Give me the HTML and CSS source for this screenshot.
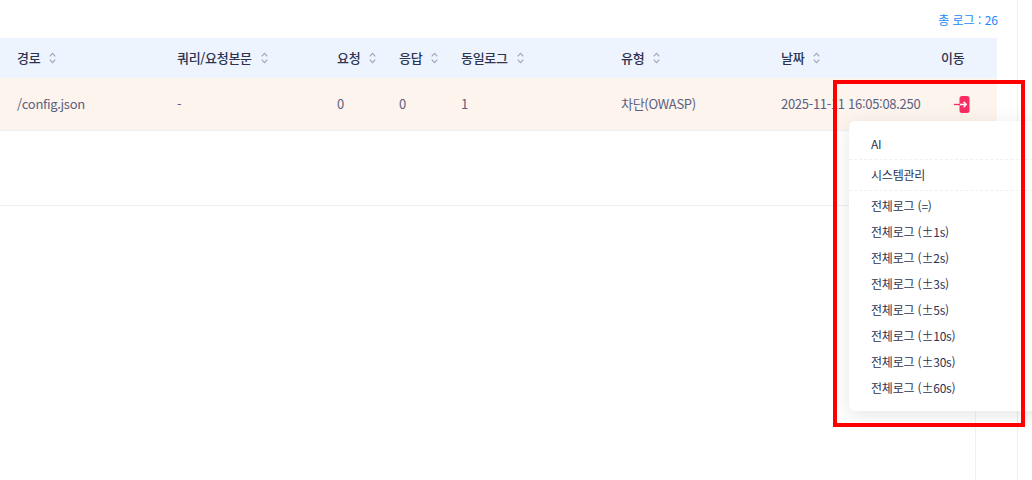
FILE: index.html
```html
<!DOCTYPE html>
<html lang="ko">
<head>
    <meta charset="UTF-8">
    <title>로그 목록</title>
    <link rel="stylesheet" href="styles.css">
</head>
<body>
    <div class="log-panel">
        <div class="log-total">총 로그 : 26</div>

        <table class="log-table">
            <colgroup>
                <col class="col-wide">
                <col class="col-wide">
                <col class="col-narrow">
                <col class="col-narrow">
                <col class="col-wide">
                <col class="col-wide">
                <col class="col-wide">
                <col>
            </colgroup>
            <thead>
                <tr>
                    <th><span class="th-label">경로<svg class="sort-icon" viewBox="0 0 7 12"><path d="M.7 4.4 3.5 1.4l2.8 3M.7 7.6l2.8 3 2.8-3"/></svg></span></th>
                    <th><span class="th-label">쿼리/요청본문<svg class="sort-icon" viewBox="0 0 7 12"><path d="M.7 4.4 3.5 1.4l2.8 3M.7 7.6l2.8 3 2.8-3"/></svg></span></th>
                    <th><span class="th-label">요청<svg class="sort-icon" viewBox="0 0 7 12"><path d="M.7 4.4 3.5 1.4l2.8 3M.7 7.6l2.8 3 2.8-3"/></svg></span></th>
                    <th><span class="th-label">응답<svg class="sort-icon" viewBox="0 0 7 12"><path d="M.7 4.4 3.5 1.4l2.8 3M.7 7.6l2.8 3 2.8-3"/></svg></span></th>
                    <th><span class="th-label">동일로그<svg class="sort-icon" viewBox="0 0 7 12"><path d="M.7 4.4 3.5 1.4l2.8 3M.7 7.6l2.8 3 2.8-3"/></svg></span></th>
                    <th><span class="th-label">유형<svg class="sort-icon" viewBox="0 0 7 12"><path d="M.7 4.4 3.5 1.4l2.8 3M.7 7.6l2.8 3 2.8-3"/></svg></span></th>
                    <th><span class="th-label">날짜<svg class="sort-icon" viewBox="0 0 7 12"><path d="M.7 4.4 3.5 1.4l2.8 3M.7 7.6l2.8 3 2.8-3"/></svg></span></th>
                    <th>이동</th>
                </tr>
            </thead>
            <tbody>
                <tr class="row-blocked">
                    <td>/config.json</td>
                    <td>-</td>
                    <td>0</td>
                    <td>0</td>
                    <td>1</td>
                    <td>차단(OWASP)</td>
                    <td>2025-11-11 16:05:08.250</td>
                    <td class="td-move">
                        <svg class="move-icon" width="17" height="17" viewBox="0 0 17 17">
                            <rect x="5.5" y="0" width="10" height="17" rx="2.5" fill="#fb2c62"/>
                            <path d="M0 8.5h6" stroke="#fb2c62" stroke-width="1.3" fill="none"/>
                            <path d="M6 8.5h6M9.6 5.8l2.7 2.7-2.7 2.7" stroke="#fff" stroke-width="1.3" fill="none"/>
                        </svg>
                    </td>
                </tr>
                <tr class="row-empty">
                    <td colspan="8"></td>
                </tr>
            </tbody>
        </table>
    </div>

    <!-- Guide lines behind the menu -->
    <div class="guide guide-inner"></div>
    <div class="guide guide-outer"></div>

    <!-- Move menu -->
    <div class="move-menu">
        <div class="menu-group">AI</div>
        <div class="menu-group">시스템관리</div>
        <ul class="menu-list">
            <li>전체로그 (=)</li>
            <li>전체로그 (±1s)</li>
            <li>전체로그 (±2s)</li>
            <li>전체로그 (±3s)</li>
            <li>전체로그 (±5s)</li>
            <li>전체로그 (±10s)</li>
            <li>전체로그 (±30s)</li>
            <li>전체로그 (±60s)</li>
        </ul>
    </div>

    <div class="highlight-box"></div>
</body>
</html>
```

FILE: styles.css
```css
:root {
    --text-strong: #2d3350;
    --text-normal: #5b6180;
    --line-color: #eef0f3;
}

html, body {
    height: 100%;
}

body {
    position: relative;
    margin: 0;
    overflow: hidden;
    background-color: #fff;
    color: var(--text-normal);
    font-family: "Noto Sans CJK KR", "Noto Sans", sans-serif;
    font-size: 13px;
    letter-spacing: -0.3px;
}

.log-panel {
    width: 997px;
}

.log-total {
    height: 38px;
    margin-right: -1px;
    line-height: 40px;
    text-align: right;
    font-size: 12px;
    letter-spacing: 0;
    color: #1e87f7;
}

/* Table */
.log-table {
    width: 100%;
    table-layout: fixed;
    border-collapse: collapse;
}

.col-wide {
    width: 160px;
}

.col-narrow {
    width: 62px;
}

.log-table th,
.log-table td {
    padding: 0 0 0 17px;
    text-align: left;
    white-space: nowrap;
}

.log-table th {
    height: 39px;
    padding-bottom: 1px;
    background-color: #edf4fe;
    color: var(--text-strong);
    font-weight: 500;
}

.th-label {
    display: flex;
    align-items: center;
    gap: 9px;
}

.sort-icon {
    width: 7px;
    height: 12px;
    fill: none;
    stroke: #9ea4bd;
    stroke-width: 1.1;
}

.row-blocked td {
    height: 50px;
    padding-bottom: 2px;
    background-color: #fdf4ee;
    border-bottom: 1px solid var(--line-color);
}

.row-empty td {
    height: 74px;
    border-bottom: 1px solid var(--line-color);
}

.log-table .td-move {
    padding-left: 30px;
    padding-bottom: 0;
}

.move-icon {
    display: block;
}

.guide {
    position: absolute;
    width: 1px;
    background-color: var(--line-color);
}

.guide-inner {
    left: 975px;
    top: 131px;
    bottom: 0;
}

.guide-outer {
    left: 1017px;
    top: 0;
    bottom: 0;
}

/* Move Menu */
.move-menu {
    position: absolute;
    left: 849px;
    top: 121px;
    width: 220px;
    padding: 8px 0 10px;
    background-color: #fff;
    border-radius: 6px;
    box-shadow: 0 4px 20px rgba(0,0,0,0.1);
    color: var(--text-strong);
    font-size: 12px;
    letter-spacing: -0.2px;
}

.menu-group {
    height: 30px;
    line-height: 30px;
    padding-left: 22px;
    border-bottom: 1px dashed var(--line-color);
}

.menu-list {
    margin: 2px 0 0;
    padding: 0;
    list-style: none;
}

.menu-list li {
    height: 26px;
    line-height: 26px;
    padding-left: 22px;
}

.highlight-box {
    position: absolute;
    left: 833px;
    top: 80px;
    width: 192px;
    height: 347px;
    box-sizing: border-box;
    border: 4px solid #ff0000;
}
```
